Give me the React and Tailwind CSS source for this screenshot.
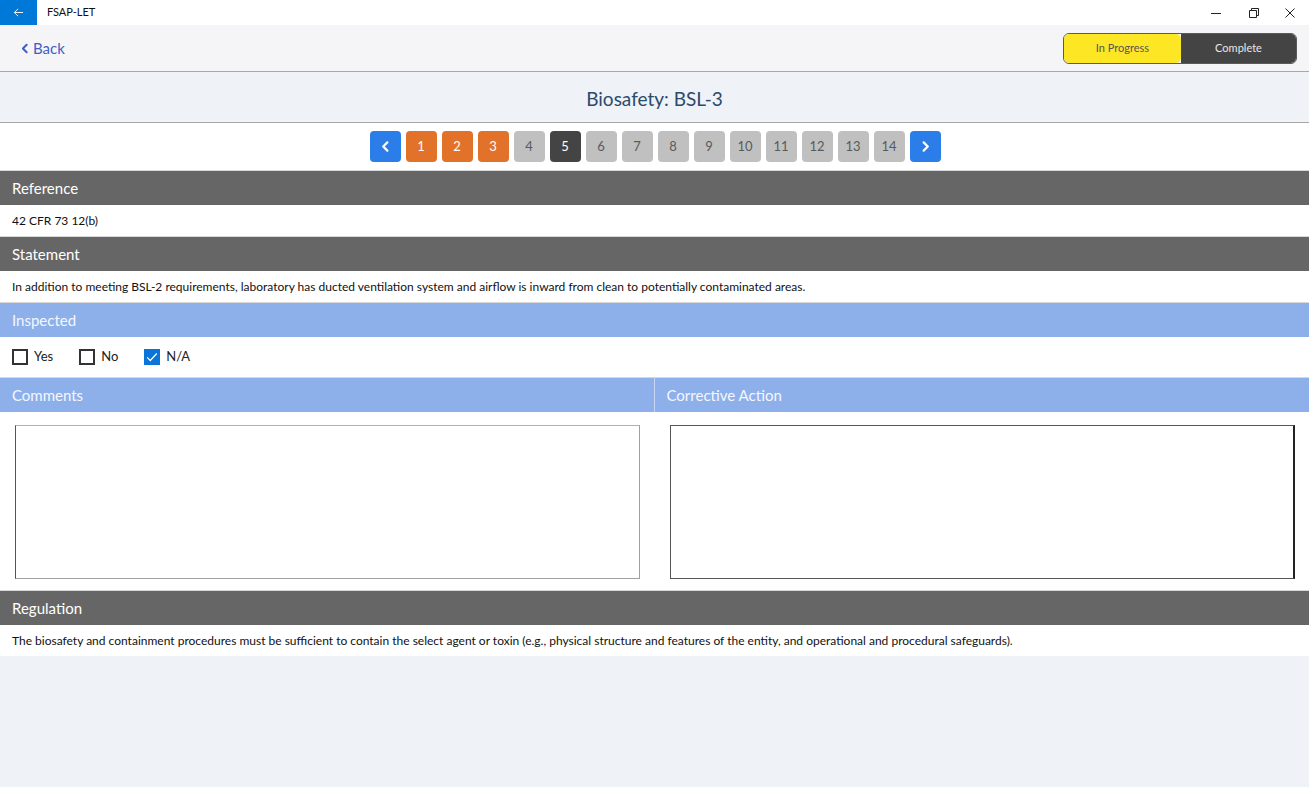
import { useState } from "react";

const pages = [
  { n: 1, s: "done" },
  { n: 2, s: "done" },
  { n: 3, s: "done" },
  { n: 4, s: "todo" },
  { n: 5, s: "current" },
  { n: 6, s: "todo" },
  { n: 7, s: "todo" },
  { n: 8, s: "todo" },
  { n: 9, s: "todo" },
  { n: 10, s: "todo" },
  { n: 11, s: "todo" },
  { n: 12, s: "todo" },
  { n: 13, s: "todo" },
  { n: 14, s: "todo" },
];

const pageClass = {
  done: "bg-[#e2722a] text-white",
  todo: "bg-[#c0c0c0] text-[#5a5a5a]",
  current: "bg-[#444444] text-white",
};

function Chevron({ dir = "left", className = "" }) {
  return (
    <svg viewBox="0 0 12 12" className={className} fill="none">
      <path
        d={dir === "left" ? "M8 1.5 3.5 6 8 10.5" : "M4 1.5 8.5 6 4 10.5"}
        stroke="currentColor"
        strokeWidth="2.4"
        strokeLinecap="round"
        strokeLinejoin="round"
      />
    </svg>
  );
}

function SectionHeader({ children, blue }) {
  return (
    <div
      className={`h-[35px] shrink-0 flex items-center px-3 text-[15px] ${
        blue ? "bg-[#8eb0ea] text-[#f4f7fd]" : "bg-[#666666] text-white"
      } border-t border-[#d8d8d8]`}
    >
      {children}
    </div>
  );
}

function Check({ label, checked, onClick }) {
  return (
    <button onClick={onClick} className="flex items-center gap-[6px] text-[13px] text-[#222]">
      <span
        className={`w-[16px] h-[16px] flex items-center justify-center ${
          checked ? "bg-[#0a74d9] border border-[#0a74d9]" : "border-2 border-[#333] bg-white"
        }`}
      >
        {checked && (
          <svg viewBox="0 0 16 16" className="w-[14px] h-[14px]" fill="none">
            <path d="M2.5 8.5 6 12l7.5-8" stroke="white" strokeWidth="1.4" />
          </svg>
        )}
      </span>
      {label}
    </button>
  );
}

export default function App() {
  const [status, setStatus] = useState("progress");
  const [inspected, setInspected] = useState("na");

  return (
    <div
      className="w-[1309px] h-[787px] flex flex-col bg-[#eff2f6] overflow-hidden"
      style={{ fontFamily: "Lato, 'Open Sans', sans-serif" }}
    >
      {/* window title bar */}
      <div className="h-[25px] flex items-center bg-white shrink-0">
        <div className="w-[37px] h-full bg-[#0078d7] flex items-center justify-center text-white">
          <svg viewBox="0 0 12 12" className="w-[11px] h-[11px]" fill="none">
            <path d="M11 6H1.5M5.5 2 1.5 6l4 4" stroke="currentColor" strokeWidth="1" />
          </svg>
        </div>
        <span className="ml-[10px] text-[11px] text-[#111]">FSAP-LET</span>
        <div className="ml-auto flex h-full text-[#222]">
          <div className="w-[36px] flex items-center justify-center">
            <svg viewBox="0 0 10 10" className="w-[10px] h-[10px]">
              <path d="M0 5.5h10" stroke="currentColor" strokeWidth="1" />
            </svg>
          </div>
          <div className="w-[36px] flex items-center justify-center ml-[2px]">
            <svg viewBox="0 0 10 10" className="w-[10px] h-[10px]" fill="none">
              <path d="M0.5 2.5h7v7h-7z" stroke="currentColor" strokeWidth="1" />
              <path d="M2.5 2.5V0.5h7v7h-2" stroke="currentColor" strokeWidth="1" />
            </svg>
          </div>
          <div className="w-[36px] flex items-center justify-center mr-[1px]">
            <svg viewBox="0 0 10 10" className="w-[10px] h-[10px]">
              <path d="M0.5 0.5l9 9M9.5 0.5l-9 9" stroke="currentColor" strokeWidth="1" />
            </svg>
          </div>
        </div>
      </div>

      {/* toolbar */}
      <div className="h-[47px] shrink-0 bg-[#f5f5f7] border-b border-[#a8a8a8] flex items-center px-[20px]">
        <button className="flex items-center gap-[3px] text-[15px] text-[#3e5fc8]">
          <Chevron dir="left" className="w-[10px] h-[13px]" />
          Back
        </button>
        <div className="ml-auto mr-[-8px] flex h-[31px] w-[234px] rounded-[6px] overflow-hidden border border-[#5a5a5a] text-[11px]">
          <button
            onClick={() => setStatus("progress")}
            className={`w-[117px] h-full pt-[1px] ${
              status === "progress" ? "bg-[#fde725] text-[#555]" : "bg-[#444] text-[#ddd]"
            } rounded-r-[5px]`}
          >
            In Progress
          </button>
          <button
            onClick={() => setStatus("complete")}
            className={`flex-1 h-full pt-[1px] ${
              status === "complete" ? "bg-[#fde725] text-[#555]" : "bg-[#444] text-[#e8e8e8]"
            }`}
          >
            Complete
          </button>
        </div>
      </div>

      {/* title */}
      <div className="h-[51px] shrink-0 flex items-center justify-center pt-[4px] border-b border-[#a8a8a8] text-[19px] text-[#2c4a6c]">
        Biosafety: BSL-3
      </div>

      {/* pager */}
      <div className="h-[47px] shrink-0 bg-white flex items-center justify-center gap-[5px] pl-[1px]">
        <button className="w-[31px] h-[31px] rounded-[4px] bg-[#2b7de9] text-white flex items-center justify-center">
          <Chevron dir="left" className="w-[11px] h-[11px]" />
        </button>
        {pages.map((p) => (
          <button
            key={p.n}
            className={`w-[31px] h-[31px] rounded-[4px] text-[13px] flex items-center justify-center ${pageClass[p.s]}`}
          >
            {p.n}
          </button>
        ))}
        <button className="w-[31px] h-[31px] rounded-[4px] bg-[#2b7de9] text-white flex items-center justify-center">
          <Chevron dir="right" className="w-[11px] h-[11px]" />
        </button>
      </div>

      <SectionHeader>Reference</SectionHeader>
      <div className="h-[31px] shrink-0 bg-white flex items-center px-3 text-[12px] text-[#111]">
        42 CFR 73 12(b)
      </div>

      <SectionHeader>Statement</SectionHeader>
      <div className="h-[31px] shrink-0 bg-white flex items-center px-3 text-[12px] text-[#111]">
        In addition to meeting BSL-2 requirements, laboratory has ducted ventilation system and airflow is
        inward from clean to potentially contaminated areas.
      </div>

      <SectionHeader blue>Inspected</SectionHeader>
      <div className="h-[40px] shrink-0 bg-white flex items-center px-3 gap-[26px]">
        <Check label="Yes" checked={inspected === "yes"} onClick={() => setInspected("yes")} />
        <Check label="No" checked={inspected === "no"} onClick={() => setInspected("no")} />
        <Check label="N/A" checked={inspected === "na"} onClick={() => setInspected("na")} />
      </div>

      <div className="grid grid-cols-2 bg-white shrink-0">
        <div className="border-r border-[#c8d6f2]">
          <SectionHeader blue>Comments</SectionHeader>
        </div>
        <div>
          <SectionHeader blue>Corrective Action</SectionHeader>
        </div>
        <div className="px-[15px] pt-[13px] pb-[11px]">
          <textarea className="block w-full h-[154px] resize-none border border-[#a0a0a0] border-l-[#555] border-t-[#b0b0b0] bg-white outline-none" />
        </div>
        <div className="pl-[15px] pr-[14px] pt-[13px] pb-[11px]">
          <textarea className="block w-full h-[154px] resize-none border border-[#555] border-r-2 border-r-[#222] bg-white outline-none" />
        </div>
      </div>

      <SectionHeader>Regulation</SectionHeader>
      <div className="h-[31px] shrink-0 bg-white flex items-center px-3 text-[12px] text-[#111]">
        The biosafety and containment procedures must be sufficient to contain the select agent or toxin (e.g.,
        physical structure and features of the entity, and operational and procedural safeguards).
      </div>

      <div className="flex-1" />
    </div>
  );
}
